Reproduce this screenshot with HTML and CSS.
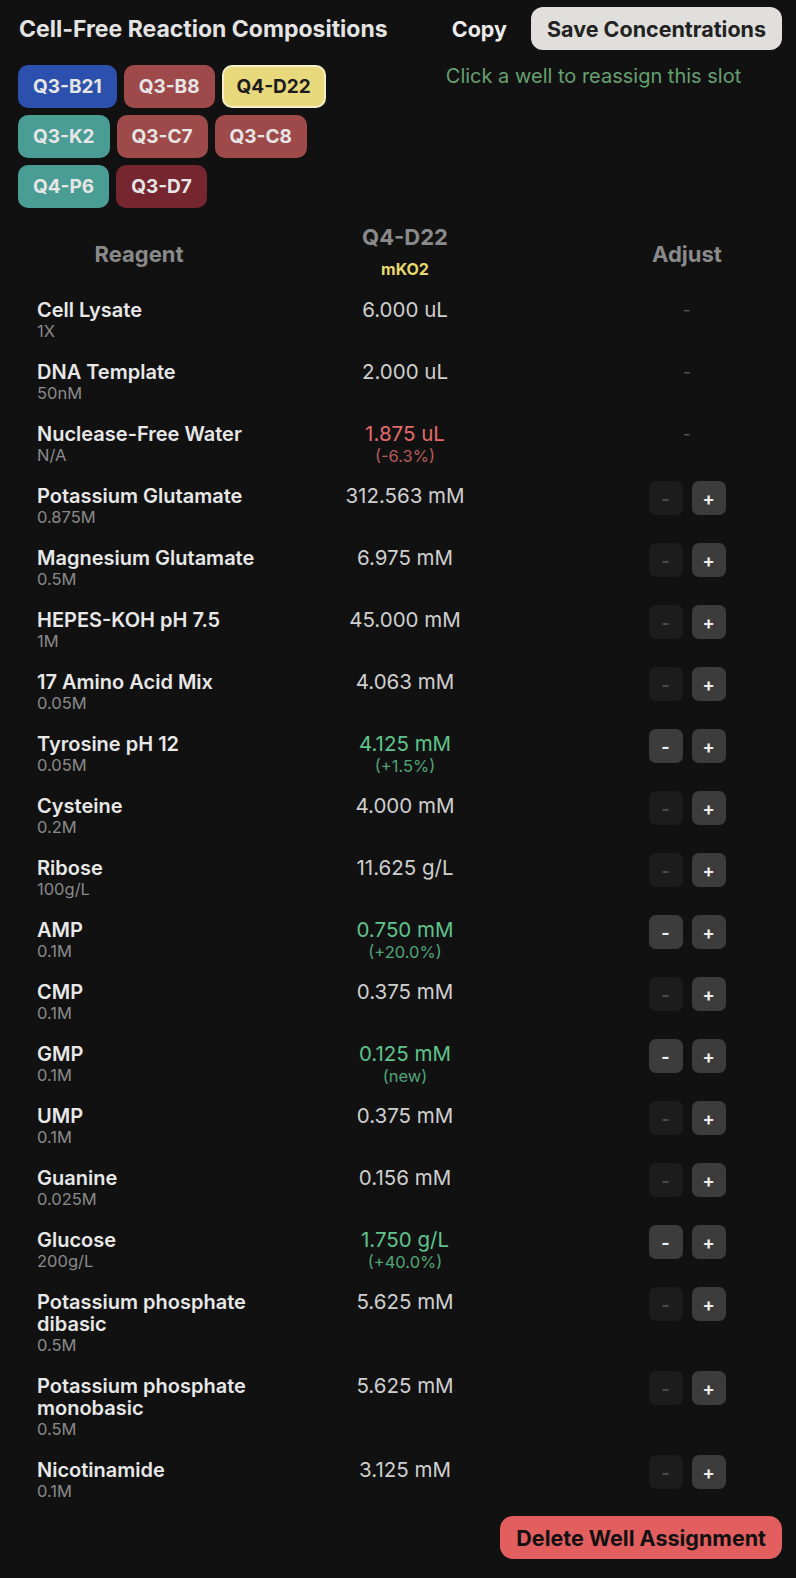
FILE: index.html
```html
<!DOCTYPE html>
<html lang="en">
<head>
    <meta charset="UTF-8">
    <meta name="viewport" content="width=device-width, initial-scale=1.0">
    <title>Cell-Free Reaction Compositions</title>
    <link rel="stylesheet" href="styles.css">
</head>
<body>
    <div class="panel">
        <div class="panel-head">
            <h2>Cell-Free Reaction Compositions</h2>
            <button class="copy-btn">Copy</button>
            <button class="save-btn">Save Concentrations</button>
        </div>

        <div class="slot-row">
            <div class="chips">
                <button class="chip blue">Q3-B21</button>
                <button class="chip red">Q3-B8</button>
                <button class="chip yellow selected">Q4-D22</button>
                <button class="chip teal">Q3-K2</button>
                <button class="chip red">Q3-C7</button>
                <button class="chip red">Q3-C8</button>
                <button class="chip teal">Q4-P6</button>
                <button class="chip wine">Q3-D7</button>
            </div>
            <p class="hint">Click a well to reassign this slot</p>
        </div>

        <div class="table">
            <div class="table-head">
                <div class="th">Reagent</div>
                <div class="th th-well">
                    <div>Q4-D22</div>
                    <div class="th-sub">mKO2</div>
                </div>
                <div class="th th-adjust">Adjust</div>
            </div>

            <div class="row">
                <div class="reagent"><div class="name">Cell Lysate</div><div class="stock">1X</div></div>
                <div class="amount"><div class="value">6.000 uL</div></div>
                <div class="adjust"><span class="dash">-</span></div>
            </div>
            <div class="row">
                <div class="reagent"><div class="name">DNA Template</div><div class="stock">50nM</div></div>
                <div class="amount"><div class="value">2.000 uL</div></div>
                <div class="adjust"><span class="dash">-</span></div>
            </div>
            <div class="row">
                <div class="reagent"><div class="name">Nuclease-Free Water</div><div class="stock">N/A</div></div>
                <div class="amount down"><div class="value">1.875 uL</div><div class="delta">(-6.3%)</div></div>
                <div class="adjust"><span class="dash">-</span></div>
            </div>
            <div class="row">
                <div class="reagent"><div class="name">Potassium Glutamate</div><div class="stock">0.875M</div></div>
                <div class="amount"><div class="value">312.563 mM</div></div>
                <div class="adjust"><button class="step off">-</button><button class="step">+</button></div>
            </div>
            <div class="row">
                <div class="reagent"><div class="name">Magnesium Glutamate</div><div class="stock">0.5M</div></div>
                <div class="amount"><div class="value">6.975 mM</div></div>
                <div class="adjust"><button class="step off">-</button><button class="step">+</button></div>
            </div>
            <div class="row">
                <div class="reagent"><div class="name">HEPES-KOH pH 7.5</div><div class="stock">1M</div></div>
                <div class="amount"><div class="value">45.000 mM</div></div>
                <div class="adjust"><button class="step off">-</button><button class="step">+</button></div>
            </div>
            <div class="row">
                <div class="reagent"><div class="name">17 Amino Acid Mix</div><div class="stock">0.05M</div></div>
                <div class="amount"><div class="value">4.063 mM</div></div>
                <div class="adjust"><button class="step off">-</button><button class="step">+</button></div>
            </div>
            <div class="row">
                <div class="reagent"><div class="name">Tyrosine pH 12</div><div class="stock">0.05M</div></div>
                <div class="amount up"><div class="value">4.125 mM</div><div class="delta">(+1.5%)</div></div>
                <div class="adjust"><button class="step">-</button><button class="step">+</button></div>
            </div>
            <div class="row">
                <div class="reagent"><div class="name">Cysteine</div><div class="stock">0.2M</div></div>
                <div class="amount"><div class="value">4.000 mM</div></div>
                <div class="adjust"><button class="step off">-</button><button class="step">+</button></div>
            </div>
            <div class="row">
                <div class="reagent"><div class="name">Ribose</div><div class="stock">100g/L</div></div>
                <div class="amount"><div class="value">11.625 g/L</div></div>
                <div class="adjust"><button class="step off">-</button><button class="step">+</button></div>
            </div>
            <div class="row">
                <div class="reagent"><div class="name">AMP</div><div class="stock">0.1M</div></div>
                <div class="amount up"><div class="value">0.750 mM</div><div class="delta">(+20.0%)</div></div>
                <div class="adjust"><button class="step">-</button><button class="step">+</button></div>
            </div>
            <div class="row">
                <div class="reagent"><div class="name">CMP</div><div class="stock">0.1M</div></div>
                <div class="amount"><div class="value">0.375 mM</div></div>
                <div class="adjust"><button class="step off">-</button><button class="step">+</button></div>
            </div>
            <div class="row">
                <div class="reagent"><div class="name">GMP</div><div class="stock">0.1M</div></div>
                <div class="amount up"><div class="value">0.125 mM</div><div class="delta">(new)</div></div>
                <div class="adjust"><button class="step">-</button><button class="step">+</button></div>
            </div>
            <div class="row">
                <div class="reagent"><div class="name">UMP</div><div class="stock">0.1M</div></div>
                <div class="amount"><div class="value">0.375 mM</div></div>
                <div class="adjust"><button class="step off">-</button><button class="step">+</button></div>
            </div>
            <div class="row">
                <div class="reagent"><div class="name">Guanine</div><div class="stock">0.025M</div></div>
                <div class="amount"><div class="value">0.156 mM</div></div>
                <div class="adjust"><button class="step off">-</button><button class="step">+</button></div>
            </div>
            <div class="row">
                <div class="reagent"><div class="name">Glucose</div><div class="stock">200g/L</div></div>
                <div class="amount up"><div class="value">1.750 g/L</div><div class="delta">(+40.0%)</div></div>
                <div class="adjust"><button class="step">-</button><button class="step">+</button></div>
            </div>
            <div class="row">
                <div class="reagent"><div class="name">Potassium phosphate dibasic</div><div class="stock">0.5M</div></div>
                <div class="amount"><div class="value">5.625 mM</div></div>
                <div class="adjust"><button class="step off">-</button><button class="step">+</button></div>
            </div>
            <div class="row">
                <div class="reagent"><div class="name">Potassium phosphate monobasic</div><div class="stock">0.5M</div></div>
                <div class="amount"><div class="value">5.625 mM</div></div>
                <div class="adjust"><button class="step off">-</button><button class="step">+</button></div>
            </div>
            <div class="row">
                <div class="reagent"><div class="name">Nicotinamide</div><div class="stock">0.1M</div></div>
                <div class="amount"><div class="value">3.125 mM</div></div>
                <div class="adjust"><button class="step off">-</button><button class="step">+</button></div>
            </div>
        </div>

        <div class="panel-foot">
            <button class="delete-btn">Delete Well Assignment</button>
        </div>
    </div>
</body>
</html>
```

FILE: styles.css
```css
body {
    background-color: #111111;
    color: #e6e6e6;
    font-family: Inter, "Noto Sans", sans-serif;
    margin: 0;
}

button {
    font-family: inherit;
    border: none;
    cursor: pointer;
}

.panel {
    padding: 7px 14px 20px 18px;
}

/* top bar */
.panel-head {
    display: flex;
    align-items: center;
    height: 43px;
}

.panel-head h2 {
    flex: 1;
    margin: 0 0 0 1px;
    font-size: 23px;
    font-weight: 700;
    color: #e4e4e4;
}

.copy-btn {
    background: none;
    color: #ececec;
    font-size: 21.5px;
    font-weight: 700;
    padding: 0;
    margin-right: 24px;
}

.save-btn {
    background-color: #e0dfdb;
    color: #222222;
    font-size: 21.5px;
    font-weight: 700;
    height: 43px;
    padding: 0 16px;
    border-radius: 12px;
}

/* well slots */
.slot-row {
    display: flex;
    margin-top: 15px;
}

.chips {
    width: 375px;
    display: flex;
    flex-wrap: wrap;
    gap: 7px;
}

.chip {
    height: 43px;
    padding: 0 15px;
    border-radius: 10px;
    font-size: 19px;
    font-weight: 700;
    color: #e6e6e6;
}

.chip.blue { background-color: #2b50ad; }
.chip.red { background-color: #9f4a4a; }
.chip.teal { background-color: #4a9d95; }
.chip.wine { background-color: #76262f; }
.chip.yellow {
    background-color: #e7d97c;
    color: #1c1c1c;
    border: 2px solid #f4efc6;
    padding: 0 13px;
}

.hint {
    flex: 1;
    margin: -1px 0 0;
    padding-left: 12px;
    text-align: center;
    font-size: 20px;
    line-height: 24px;
    color: #66a070;
}

/* table */
.table {
    margin-top: 12px;
}

.table-head,
.row {
    display: grid;
    grid-template-columns: 242px 290px 1fr;
}

.table-head {
    height: 68px;
    align-items: center;
}

.th {
    text-align: center;
    font-size: 22px;
    font-weight: 700;
    color: #8a8a8a;
    line-height: 26px;
}

.th-well {
    padding-bottom: 6px;
}

.th-sub {
    font-size: 16px;
    line-height: 18px;
    color: #e8d96a;
    margin-top: 10px;
}

.th-adjust {
    padding-left: 42px;
}

.reagent {
    padding: 11px 4px 9px 19px;
}

.name {
    font-size: 20px;
    font-weight: 600;
    line-height: 22px;
    color: #e8e8e8;
}

.stock {
    font-size: 16.5px;
    line-height: 20px;
    color: #8a8a8a;
}

.amount {
    padding: 10px 0 8px;
    text-align: center;
    color: #cfcfcf;
}

.value {
    font-size: 20.5px;
    line-height: 24px;
}

.delta {
    font-size: 16.5px;
    line-height: 20px;
}

.amount.down .value { color: #e26a6a; }
.amount.down .delta { color: #b85a5a; }
.amount.up .value { color: #5ec48c; }
.amount.up .delta { color: #4fa677; }

.adjust {
    padding: 7px 0 0 42px;
    display: flex;
    justify-content: center;
    align-items: flex-start;
    gap: 9px;
}

.dash {
    padding-top: 4px;
    line-height: 22px;
    font-size: 17px;
    color: #555555;
}

.step {
    width: 34px;
    height: 34px;
    border-radius: 7px;
    background-color: #3c3c3c;
    color: #eeeeee;
    font-size: 18px;
    font-weight: 700;
    padding: 0;
}

.step.off {
    background-color: #1c1c1c;
    color: #4a4a4a;
}

/* footer */
.panel-foot {
    display: flex;
    justify-content: flex-end;
    margin-top: 6px;
}

.delete-btn {
    background-color: #e35e5e;
    color: #111111;
    font-size: 21.5px;
    font-weight: 700;
    height: 43px;
    padding: 0 16px;
    border-radius: 13px;
}
```
